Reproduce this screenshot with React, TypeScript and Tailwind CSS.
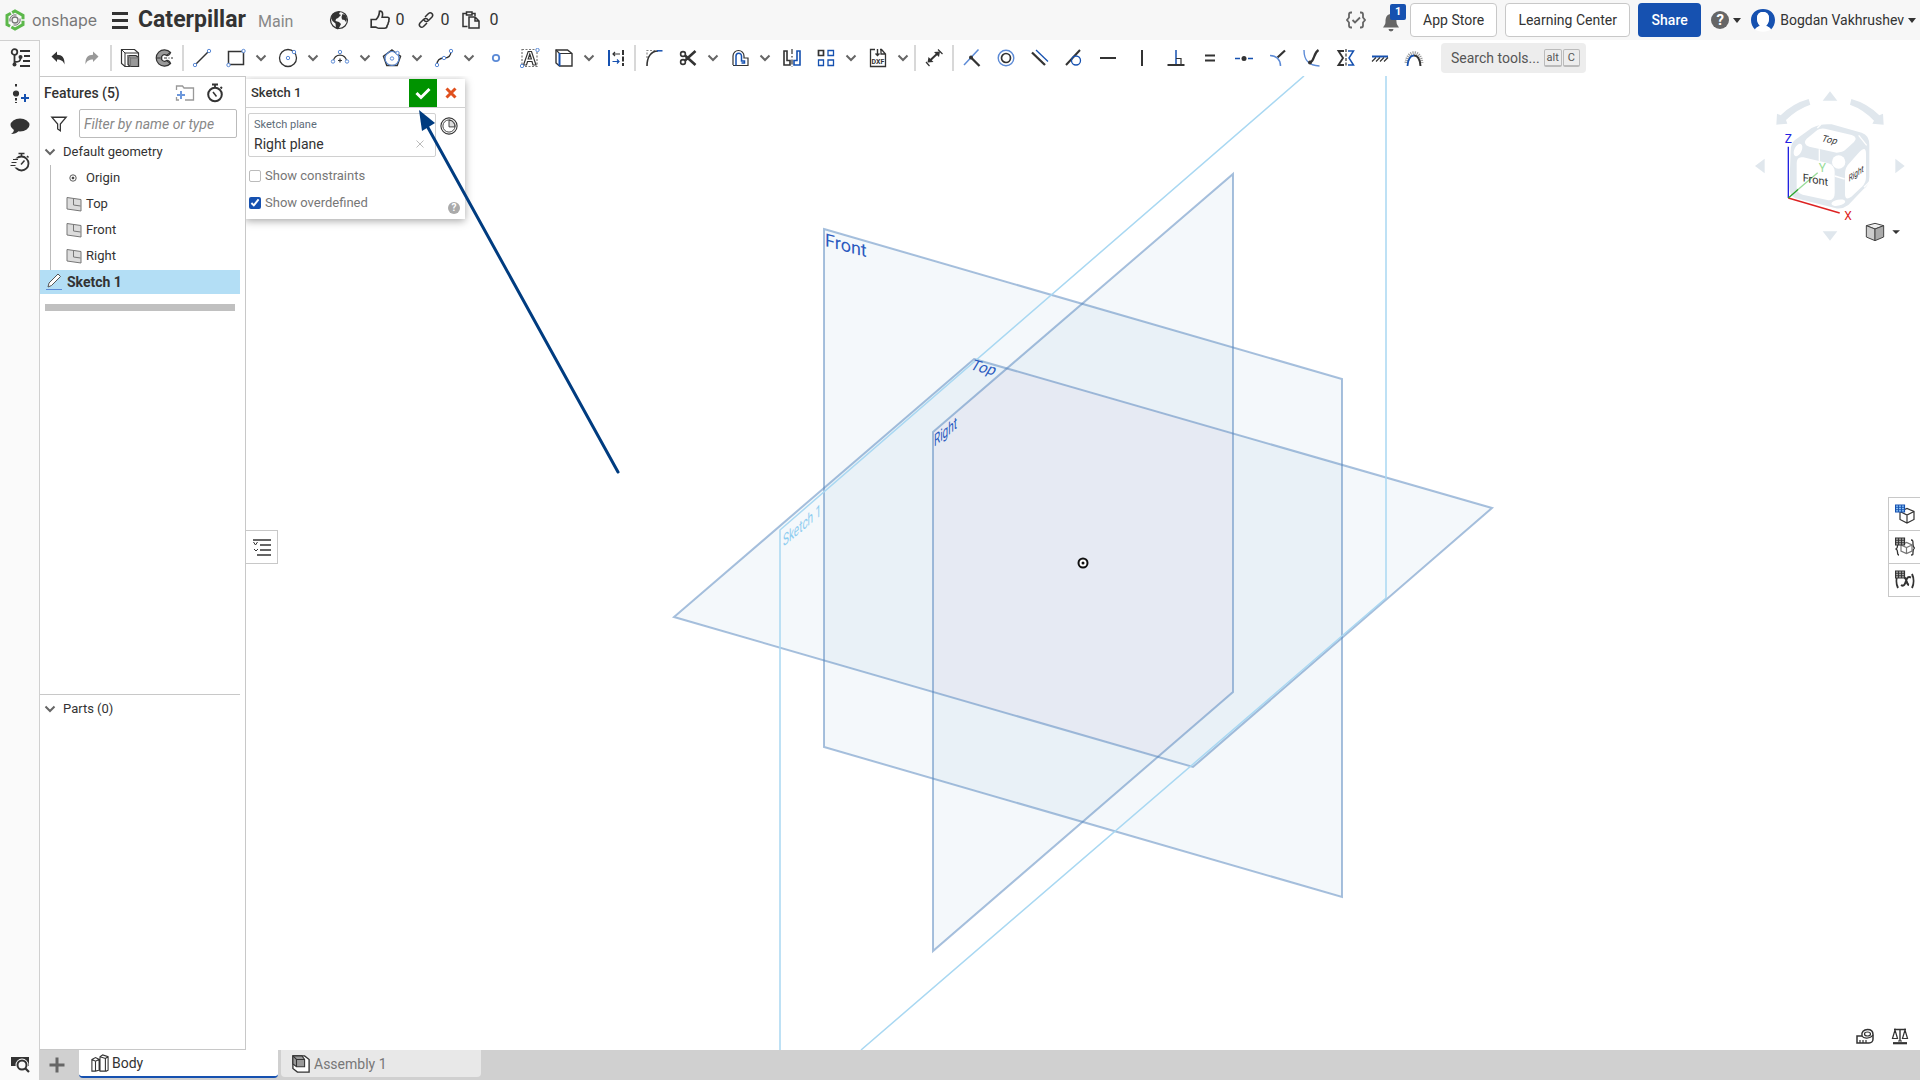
import React, { useState } from 'react';

const K = '#333333';
const B = '#1651b0';
const L = '#5b8ad6';

const Icon = ({ size = 20, children }: { size?: number; children: React.ReactNode }) => (
  <svg width={size} height={size} viewBox="0 0 20 20" fill="none" stroke={K} strokeWidth="1.2" className="shrink-0">
    {children}
  </svg>
);

const Dot = ({ x, y }: { x: number; y: number }) => (
  <circle cx={x} cy={y} r="1.7" fill="#fff" stroke={L} strokeWidth="1" />
);

const Chevron = () => (
  <svg width="12" height="8" viewBox="0 0 12 8" fill="none" stroke="#666" strokeWidth="2">
    <path d="M1.5 1.5 6 6l4.500-4.500" />
  </svg>
);

const Caret = () => (
  <svg width="8" height="5" viewBox="0 0 8 5" fill={K}>
    <path d="M0 0h8L4 5z" />
  </svg>
);

const Plane = () => (
  <svg width="16" height="16" viewBox="0 0 16 16" fill="#dcdcdc" stroke="#777" strokeWidth="1">
    <path d="M1 1.500 15 3.500V15L1 13z" />
    <path d="M7.500 2.500v6.500l7 1" fill="none" />
  </svg>
);

const Stopwatch = () => (
  <Icon>
    <circle cx="10" cy="11.500" r="6.800" strokeWidth="2" />
    <path d="M7 1.500h6M10 1.500v3M15.500 4l1.500 1.500" strokeWidth="1.800" />
    <path d="M11.500 13.500 8 9" strokeWidth="1.500" />
  </Icon>
);

type Tool = { name: string; icon?: React.ReactNode; menu?: boolean };

const tools: Tool[] = [
  {
    name: 'Undo',
    icon: <path d="M3.500 8.500 9 3.500v3.200c5 0 8 3 7.500 9.800-1.200-3.600-3.500-5-7.500-5V14z" fill={K} stroke="none" />,
  },
  {
    name: 'Redo',
    icon: <path d="M16.500 8.500 11 3.500v3.200c-5 0-8 3-7.500 9.800 1.200-3.600 3.500-5 7.500-5V14z" fill="#999" stroke="none" />,
  },
  { name: '|' },
  {
    name: 'Extrude',
    icon: (
      <>
        <path d="M1.500 1.500h13l4 3.500v13.500H5l-3.500-3z" />
        <path d="M1.500 1.500 5 5h13.500M5 5v13.500" strokeWidth="1" />
        <path d="M8 7.500h8l2.500 2v9H10l-2-2z" fill="#999" />
        <path d="M8 7.500 10.500 10h8M10.500 10v8.500" stroke="#777" />
      </>
    ),
  },
  {
    name: 'Revolve',
    icon: (
      <>
        <path d="M16.500 4.500A8.200 8.200 0 1 0 16.500 15.500L12.500 12.500A3.200 3.200 0 1 1 12.500 7.500z" fill="#999" />
        <path d="M12.500 7.500c1.500.3 3.500-.5 4-3M12.500 12.500c1.500-.3 3.500.5 4 3" />
        <path d="M3 10h16" strokeDasharray="3 1.500 1 1.500" />
      </>
    ),
  },
  { name: '|' },
  { name: 'Line', icon: <><path d="M3 17 17 3" strokeWidth="1.500" /><Dot x={3} y={17} /><Dot x={17} y={3} /></> },
  {
    name: 'Rectangle',
    menu: true,
    icon: <><path d="M2.500 3.500h15v13h-15z" strokeWidth="1.500" /><Dot x={17.5} y={3} /><Dot x={2.5} y={17} /></>,
  },
  {
    name: 'Circle',
    menu: true,
    icon: <><circle cx="10" cy="10" r="8.500" strokeWidth="1.300" /><Dot x={10} y={10} /><Dot x={16} y={4} /></>,
  },
  {
    name: 'Arc',
    menu: true,
    icon: (
      <>
        <path d="M3 13.500a7.300 9 0 0 1 14 0" strokeWidth="1.300" />
        <path d="M10 10.500v4M8 12.500h4" />
        <Dot x={3} y={13.5} /><Dot x={17} y={13.5} /><Dot x={10} y={4} />
      </>
    ),
  },
  {
    name: 'Polygon',
    menu: true,
    icon: (
      <>
        <path d="M10 2 18.500 8.200 15.200 17.500H4.800L1.500 8.200z" strokeWidth="1.500" />
        <circle cx="10" cy="10.500" r="7" stroke={L} />
        <Dot x={10} y={10.5} /><Dot x={15.5} y={5} />
      </>
    ),
  },
  {
    name: 'Spline',
    menu: true,
    icon: (
      <>
        <path d="M3 17c0-5 2-7 7-7s7-2 7-7" strokeWidth="1.300" />
        <Dot x={3} y={17} /><Dot x={10} y={10} /><Dot x={17} y={3} />
      </>
    ),
  },
  { name: 'Point', icon: <circle cx="10" cy="10" r="3.200" stroke={L} strokeWidth="1.800" /> },
  {
    name: 'Text',
    icon: (
      <>
        <path d="M2 1.500h15v17H2z" strokeDasharray="2 1.500" stroke="#777" />
        <path d="M3.500 17 8.200 3.500h3.300L16 17h-3l-1-3.500H7.500L6.500 17zM8.200 11h3.200L9.800 6z" fill="#fff" />
        <Dot x={17.5} y={2} /><Dot x={2} y={18} />
      </>
    ),
  },
  {
    name: 'Use',
    menu: true,
    icon: (
      <>
        <path d="M2 2h11.500L18 5.500V18H5.500L2 15z" strokeWidth="1.400" />
        <path d="M2 2l3.500 3.500H18" />
        <path d="M5.500 5v13" stroke={B} strokeWidth="2" />
      </>
    ),
  },
  {
    name: 'Intersection',
    icon: (
      <>
        <path d="M3 2v16" stroke={B} strokeWidth="2" />
        <path d="M17 2v16" strokeDasharray="5 1.500" strokeWidth="2" />
        <path d="M14 6H7M9 4 7 6l2 2" />
        <path d="M6.500 13.500H13M11 11.500l2 2-2 2" stroke={B} />
      </>
    ),
  },
  { name: '|' },
  {
    name: 'Fillet',
    icon: (
      <>
        <path d="M3 10V2.500h8" strokeDasharray="2 1.500" stroke="#888" />
        <path d="M3 18C3 9 7 3 14 3" strokeWidth="1.600" />
        <path d="M13 2.800h5.500" stroke={B} strokeWidth="1.500" />
      </>
    ),
  },
  {
    name: 'Trim',
    menu: true,
    icon: (
      <>
        <circle cx="5" cy="6" r="2.400" strokeWidth="1.600" />
        <circle cx="5" cy="14" r="2.400" strokeWidth="1.600" />
        <path d="M7 7.500 17.500 17M7 12.500 17.500 3" strokeWidth="2.600" />
      </>
    ),
  },
  {
    name: 'Offset',
    menu: true,
    icon: (
      <>
        <path d="M3 17V8a5.500 5.500 0 0 1 11 0v2h4v7.500H3" strokeWidth="1.200" />
        <path d="M6 17.500V8a2.500 2.500 0 0 1 5.500 0v5h3v2h-3" stroke={B} strokeWidth="1.500" />
      </>
    ),
  },
  {
    name: 'Mirror',
    icon: (
      <>
        <path d="M2 3h3v9.500h3V17H2z" strokeWidth="1.600" />
        <path d="M18 3h-3v9.500h-3V17h6z" stroke={B} strokeWidth="1.600" />
        <path d="M10 1v18" strokeDasharray="5 2 1.500 2" />
      </>
    ),
  },
  {
    name: 'Pattern',
    menu: true,
    icon: (
      <>
        <path d="M2.500 2.500h5v5h-5z" strokeWidth="1.700" />
        <path d="M12 2.500h5.500v5H12zM2.500 12h5v5.500h-5zM12 12h5.500v5.500H12z" stroke={B} strokeWidth="1.300" />
      </>
    ),
  },
  {
    name: 'Insert DXF',
    menu: true,
    icon: (
      <>
        <path d="M7 1.500H2.500v17h15V6l-4-4.500H12M13 1.500V6h4.500" strokeWidth="1.300" />
        <path d="M9.500 1v6M7.500 5.500l2 2 2-2" strokeWidth="1.400" />
        <text x="10" y="16" fontSize="7" fontWeight="700" textAnchor="middle" fill={K} stroke="none">DXF</text>
      </>
    ),
  },
  { name: '|' },
  {
    name: 'Dimension',
    icon: (
      <>
        <path d="M6 12.500 14 5" strokeWidth="2" />
        <path d="M3.500 14.500 4.500 9l5 5zM16 3.500 15 9l-5-5z" fill={K} stroke="none" />
        <path d="M2 14 5.500 18M14 1.500 18.500 6" strokeWidth="1.200" />
      </>
    ),
  },
  { name: '|' },
  {
    name: 'Coincident',
    icon: (
      <>
        <path d="M2 17 16.500 1.500" stroke={L} strokeWidth="1.500" />
        <path d="M9 9.500 17.500 18" strokeWidth="2.300" />
        <circle cx="9" cy="9.500" r="2" fill={K} stroke="none" />
      </>
    ),
  },
  {
    name: 'Concentric',
    icon: <><circle cx="10" cy="10" r="7.800" stroke={L} strokeWidth="1.400" /><circle cx="10" cy="10" r="4.500" strokeWidth="1.700" /></>,
  },
  {
    name: 'Parallel',
    icon: <><path d="M2 4.500 15 17" strokeWidth="2.300" /><path d="M6 2 18 13.500" stroke={B} strokeWidth="1.300" /></>,
  },
  {
    name: 'Tangent',
    icon: <><path d="M2 17 16 2" strokeWidth="2" /><circle cx="12" cy="12.500" r="4.500" stroke={B} strokeWidth="1.300" /></>,
  },
  { name: 'Horizontal', icon: <path d="M2 10h16" strokeWidth="2" /> },
  { name: 'Vertical', icon: <path d="M10 2v16" strokeWidth="2" /> },
  {
    name: 'Perpendicular',
    icon: <><path d="M10 2v14" stroke={B} strokeWidth="1.500" /><path d="M1.500 17h17" strokeWidth="2" /><path d="M10 10.500h5V16" /></>,
  },
  { name: 'Equal', icon: <path d="M5 7.500h10M5 12.500h10" strokeWidth="2" /> },
  {
    name: 'Midpoint',
    icon: <><path d="M1 10.500h5M14 10.500h5" stroke={B} strokeWidth="1.500" /><circle cx="10" cy="10.500" r="2.500" fill={K} stroke="none" /></>,
  },
  {
    name: 'Normal',
    icon: <><path d="M9.500 9.500 17 2.500" strokeWidth="2.200" /><path d="M2 7.500c6 0 10.500 4 10.500 10.500" stroke={L} strokeWidth="1.500" /></>,
  },
  {
    name: 'Pierce',
    icon: (
      <>
        <path d="M2 2c0 10 4 15.500 15.500 16" stroke={L} strokeWidth="1.400" />
        <path d="M8 14.500c5-2 3-9 8.500-12.500" strokeWidth="2.200" />
        <circle cx="8" cy="14.500" r="2" fill={K} stroke="none" />
      </>
    ),
  },
  {
    name: 'Symmetric',
    icon: (
      <>
        <path d="M8 3H2.500l4.500 7-4.500 7H8" strokeWidth="1.900" />
        <path d="M12 3h5.500L13 10l4.500 7H12" stroke={B} strokeWidth="1.500" />
        <path d="M10 1v18" strokeDasharray="3 1.500" />
      </>
    ),
  },
  {
    name: 'Fix',
    icon: <><path d="M2 8.500h16" stroke={B} strokeWidth="2" /><path d="M6 9.500 2 13.500M10 9.500l-4 4M14 9.500l-4 4M18 9.500l-4 4" /></>,
  },
  {
    name: 'Curvature',
    icon: (
      <>
        <path d="M2.500 15C4 2 16 2 17.500 15" strokeWidth="4" stroke="#999" strokeDasharray="1 1" />
        <path d="M3.500 18C4 11 6.500 7.500 10 7.500" stroke={B} strokeWidth="1.800" />
        <path d="M10 7.500c3.500 0 6 3.500 6.500 10.500" strokeWidth="2" />
      </>
    ),
  },
];

const Header = () => (
  <header className="flex h-10 shrink-0 items-center bg-[#f7f7f7] pr-1">
    <svg width="22" height="22" viewBox="0 0 22 22" fill="none" className="ml-1">
      <path d="M11 2 19 6.500v9L11 20l-8-4.500v-9z" stroke="#5cb84b" strokeWidth="3" strokeDasharray="17 1.500" strokeDashoffset="4" />
      <path d="M6 12.500a5.300 5.300 0 0 1 6.500-6.500M16 9.500a5.300 5.300 0 0 1-6.500 6.500" stroke="#666" />
      <circle cx="11" cy="11" r="3" stroke="#777" strokeWidth="1.300" />
    </svg>
    <span className="ml-[6px] w-[68px] font-['Inter'] text-base text-[#777]">onshape</span>
    <button aria-label="Menu" className="ml-3 flex w-4 flex-col gap-1">
      <span className="h-[3px] bg-[#333]" />
      <span className="h-[3px] bg-[#333]" />
      <span className="h-[3px] bg-[#333]" />
    </button>
    <h1 className="ml-[10px] w-[112px] text-[23px] font-bold">Caterpillar</h1>
    <span className="ml-2 pt-1 text-base text-[#888]">Main</span>
    <button aria-label="Public" className="ml-9">
      <Icon>
        <circle cx="10" cy="10" r="8.500" />
        <path d="M3 5.500C5 2 8 1.500 11 2l-1 2 2 1-3 3-2 1-.5 2 3.500 1 2 2-2 4-1 1.500-2-1-.5-5L3.500 11 2 8zM13.500 4l3 1 1.500 4-1 3-1.500-2-2.500-.5L12.500 7z" fill={K} stroke="none" />
      </Icon>
    </button>
    <button className="ml-5 flex items-center gap-1 text-base">
      <Icon size={22}>
        <path d="M2 9.500h4.500c1.500-1.500 3-3.500 3-7.500 2.500-.5 3.500 1.500 2.500 5.500h5c1.500 0 1.500 1.500 1 2.500.5 1-.2 2-.5 2.500 0 1-.3 1.700-1 2.500 0 2-1 2.500-2.500 2.500H9c-1.500 0-2-1-3-1H2z" strokeWidth="1.500" />
      </Icon>
      <span>0</span>
    </button>
    <button className="ml-3 flex items-center gap-1 text-base">
      <Icon>
        <path d="m9 7 3.500-3.500c2.500-2 5.500 1 3.500 3.500l-3.500 3.500c-1.500 1.500-3.500 1.500-4.500-.5M11 13l-3.500 3.500c-2.500 2-5.500-1-3.500-3.500l3.500-3.500c1.500-1.500 3.500-1.500 4.500.5" strokeWidth="1.500" />
      </Icon>
      <span>0</span>
    </button>
    <button className="ml-3 flex items-center gap-2 text-base">
      <Icon>
        <path d="M6.500 16.500H2V3.500h3.500M11 3.500h3V6M5.500 2H11v3H5.500z" strokeWidth="1.500" />
        <path d="M8 7h6l4 4v7H8zM14 7v4h4" strokeWidth="1.500" />
      </Icon>
      <span>0</span>
    </button>

    <div className="ml-auto flex items-center text-sm">
      <button aria-label="Feature checks" className="mr-4">
        <svg width="20" height="18" viewBox="0 0 20 18" fill="none" stroke="#666" strokeWidth="1.800">
          <path d="M6 1.500H5c-1.500 0-2 .5-2 2v3L1 9l2 2.500v3c0 1.500.5 2 2 2h1M14 1.500h1c1.500 0 2 .5 2 2v3L19 9l-2 2.500v3c0 1.500-.5 2-2 2h-1M6.500 9l2.500 2.500L14 6.500" />
        </svg>
      </button>
      <button aria-label="Notifications" className="relative mr-1 h-8 w-6">
        <svg width="18" height="20" viewBox="0 0 18 20" fill="#666" className="mt-2">
          <path d="M9 0c4.500 0 5.500 4 5.500 8 0 2.500 1.500 3.500 2.500 5.500H1c1-2 2.500-3 2.500-5.500 0-4 1-8 5.500-8zM6.500 15h5a2.500 2.500 0 0 1-5 0z" />
        </svg>
        <span className="absolute top-0 right-0 h-4 w-4 rounded-xs bg-[#1651b0] text-center text-[11px] leading-4 font-bold text-white">1</span>
      </button>
      <button className="h-[34px] w-[87px] rounded-sm border border-[#c8c8c8] bg-white">App Store</button>
      <button className="ml-2 h-[34px] w-[125px] rounded-sm border border-[#c8c8c8] bg-white">Learning Center</button>
      <button className="ml-2 h-[34px] w-[63px] rounded-sm bg-[#1651b0] font-medium text-white">Share</button>
      <button aria-label="Help" className="ml-[10px] flex items-center gap-1">
        <span className="h-[18px] w-[18px] rounded-full bg-[#666] text-center text-[15px] leading-[18px] font-bold text-white">?</span>
        <Caret />
      </button>
      <button className="ml-[9px] flex items-center gap-1">
        <svg width="26" height="24" viewBox="0 0 26 24">
          <path d="M13 1c7 0 12 4.500 12 11 0 4-1.500 7-4 9.500-1-2-3-3-5-3.500 2-2 3-5 3-7.500C19 6.500 17 4 13 4s-6 2.500-6 6.500c0 2.500 1 5.500 3 7.500-2 .5-4 1.500-5 3.500C2.500 19 1 16 1 12 1 5.500 6 1 13 1z" fill="#1651b0" />
          <path d="M5 21.500c1-2 3-3 5-3.500-2-2-3-5-3-7.500C7 6.500 9 4 13 4s6 2.500 6 6.500c0 2.500-1 5.500-3 7.500 2 .5 4 1.500 5 3.500-5 3-11 3-16 0z" fill="#fff" />
        </svg>
        <span>Bogdan Vakhrushev</span>
        <Caret />
      </button>
    </div>
  </header>
);

const Rail = () => (
  <nav className="flex w-10 shrink-0 flex-col items-center border-t border-r border-[#d0d0d0] bg-[#fafafa] pt-[7px] pb-[6px]">
    <button aria-label="Feature list" className="mb-4">
      <Icon>
        <circle cx="4.500" cy="4" r="2.800" strokeWidth="1.800" />
        <path d="M4.500 7v11M4.500 14c5 0 6-1 6-4" strokeWidth="1.800" />
        <circle cx="4.500" cy="16.500" r="2" fill={K} stroke="none" />
        <circle cx="10.500" cy="9" r="2" fill={K} stroke="none" />
        <path d="M10 3h10M14 8h6M13 13h7M10 18h10" strokeWidth="1.800" />
      </Icon>
    </button>
    <button aria-label="Insert version" className="mb-3">
      <Icon>
        <path d="M6 0v4M6 14v5" strokeDasharray="2.500 1.500" strokeWidth="2" />
        <circle cx="6" cy="9.500" r="2.500" fill={K} />
        <path d="M15 10v8M11 14h8" stroke={B} strokeWidth="2" />
      </Icon>
    </button>
    <button aria-label="Comments" className="mb-4">
      <Icon>
        <ellipse cx="10" cy="9" rx="9.500" ry="6.500" fill={K} stroke="none" />
        <path d="M4 13c0 2-1 4-3 5 4 0 7-1.500 8-4z" fill={K} stroke="none" />
      </Icon>
    </button>
    <button aria-label="History">
      <Icon>
        <circle cx="11.500" cy="11.500" r="7" strokeWidth="1.800" />
        <path d="M8.500 1.500h6M11.500 1.500v3M17 4l1.500 1.500" strokeWidth="1.600" />
        <path d="M11 12.500 14.500 8.500" strokeWidth="1.500" />
        <path d="M2 8h7M1 11h7M0 14h7" stroke="#fafafa" strokeWidth="3" />
        <path d="M3 7.500h5M1.500 10.500h5M.5 13.500h5" strokeWidth="1.200" />
      </Icon>
    </button>
    <button aria-label="Search tabs" className="mt-auto">
      <Icon>
        <path d="M1 3h18v9H1z" fill={K} stroke="none" />
        <circle cx="12" cy="11" r="5" fill="#fafafa" stroke="#fafafa" strokeWidth="3" />
        <circle cx="12" cy="11" r="4.500" strokeWidth="2" />
        <path d="m15.500 14.500 3.500 3.500" strokeWidth="2.200" />
      </Icon>
    </button>
  </nav>
);

const Toolbar = () => (
  <div className="flex h-9 shrink-0 items-center bg-white pl-px">
    {tools.map((tool, i) =>
      tool.name === '|' ? (
        <span key={i} className="mx-px h-[26px] w-[2px] bg-[#d8d8d8]" />
      ) : (
        <div key={i} className="flex items-center">
          <button aria-label={tool.name} className="flex w-[34px] justify-center">
            <Icon>{tool.icon}</Icon>
          </button>
          {tool.menu && (
            <button aria-label={tool.name + ' options'} className="w-[18px] pl-[2px]">
              <Chevron />
            </button>
          )}
        </div>
      )
    )}
    <button className="ml-[10px] flex h-[30px] w-[145px] items-center rounded-sm bg-[#ededed] pl-[10px] text-sm whitespace-nowrap text-[#555]">
      <span className="mr-1">Search tools...</span>
      <kbd className="h-[18px] rounded-xs border border-b-2 border-[#bbb] px-[2px] font-['Roboto'] text-[11px] leading-4">alt</kbd>
      <kbd className="ml-px h-[18px] rounded-xs border border-b-2 border-[#bbb] px-1 font-['Roboto'] text-[11px] leading-4">C</kbd>
    </button>
  </div>
);

const FeaturePanel = () => {
  const [filter, setFilter] = useState('');

  return (
    <aside className="flex w-[206px] shrink-0 flex-col border-t border-r border-b border-[#c8c8c8] bg-white text-[13px]">
      <div className="flex h-8 items-center pr-5 pl-1">
        <h2 className="mr-auto text-sm font-medium">Features (5)</h2>
        <button aria-label="Add folder" className="mr-[10px]">
          <svg width="20" height="16" viewBox="0 0 20 16" fill="none" stroke="#999" strokeWidth="1.300">
            <path d="M1.500 5V1h6l1.500 2h9.500v12H10M1.500 12v3H4" />
            <path d="M6 6v8M2 10h8" stroke="#6d98dc" strokeWidth="2" />
          </svg>
        </button>
        <button aria-label="Regeneration times"><Stopwatch /></button>
      </div>
      <div className="flex items-center pl-[10px]">
        <Icon size={18}>
          <path d="M2 2.500h16l-6.500 7.500v7.500l-3-2V10z" strokeWidth="1.400" />
        </Icon>
        <input
          type="text"
          aria-label="Filter by name or type"
          placeholder="Filter by name or type"
          value={filter}
          onChange={(e) => setFilter(e.target.value)}
          className="ml-[11px] h-[29px] w-[158px] rounded-xs border border-[#bbb] px-1 text-sm italic placeholder:text-[#888]"
        />
      </div>
      <button className="mt-px flex h-[26px] items-center gap-[7px] pl-1"><Chevron />Default geometry</button>
      <ul className="ml-[10px] border-l border-[#bbb] pb-px">
        <li className="flex h-[26px] items-center pl-[18px]">
          <svg width="8" height="8" viewBox="0 0 10 10" fill="none" stroke={K} strokeWidth="1" className="mr-[9px]">
            <circle cx="5" cy="5" r="4" /><circle cx="5" cy="5" r="1.200" fill={K} />
          </svg>
          Origin
        </li>
        {['Top', 'Front', 'Right'].map((name) => (
          <li key={name} className="flex h-[26px] items-center gap-1 pl-[15px]"><Plane />{name}</li>
        ))}
      </ul>
      <button className="mr-[5px] flex h-6 items-center gap-1 bg-[#b3def5] pl-[5px] text-sm font-bold">
        <svg width="18" height="18" viewBox="0 0 18 18" fill="#fff" stroke="#555">
          <path d="m3 14 1-4 9-9 2.500 2.500-9 9z" />
          <path d="M1 16.500h16" stroke={L} />
        </svg>
        Sketch 1
      </button>
      <div className="mt-[10px] mr-[10px] ml-[5px] h-[7px] bg-[#c0c0c0]" />
      <div className="mt-auto mr-[5px] h-[355px] border-t border-[#c8c8c8]">
        <button className="flex h-7 items-center gap-[7px] pl-1"><Chevron />Parts (0)</button>
      </div>
    </aside>
  );
};

const SketchDialog = () => {
  const [constraints, setConstraints] = useState(false);
  const [overdefined, setOverdefined] = useState(true);

  return (
    <section className="absolute top-[3px] -left-px h-[140px] w-[220px] bg-white text-[13px] shadow-[0_2px_8px_rgba(0,0,0,0.35)]">
      <div className="flex h-[29px] items-center border-b border-[#d0d0d0] pl-[6px]">
        <h3 className="mr-auto font-medium">Sketch 1</h3>
        <button aria-label="Accept" className="flex h-7 w-7 items-center justify-center bg-[#009300]">
          <svg width="16" height="13" viewBox="0 0 16 13" fill="none" stroke="#fff" strokeWidth="3"><path d="m1.500 6 4.500 4.500 8.500-8.500" /></svg>
        </button>
        <button aria-label="Cancel" className="flex w-7 justify-center">
          <svg width="12" height="12" viewBox="0 0 12 12" stroke="#e0501e" strokeWidth="3"><path d="m1.500 1.500 9 9M10.500 1.500l-9 9" /></svg>
        </button>
      </div>
      <div className="flex gap-1 pt-[5px] pl-[3px]">
        <div className="h-11 w-[188px] rounded-xs border border-[#d0d0d0] px-[5px] pt-1">
          <div className="text-[11px] leading-[14px] text-[#5c6b78]">Sketch plane</div>
          <div className="flex items-center justify-between pr-[6px] text-sm leading-6">
            Right plane
            <button aria-label="Clear">
              <svg width="8" height="8" viewBox="0 0 8 8" stroke="#bbb"><path d="m.5.5 7 7M7.500.5l-7 7" /></svg>
            </button>
          </div>
        </div>
        <button aria-label="Sketch history" className="h-[26px]">
          <Icon size={18}>
            <circle cx="10" cy="10" r="9" />
            <circle cx="10" cy="10" r="6.800" fill="#fff" strokeWidth="1" />
            <path d="M10 3.500V11h6.500a7 7 0 0 0-6.500-7.500z" fill="#ddd" strokeWidth="1" />
          </Icon>
        </button>
      </div>
      <label className="mt-[9px] flex h-5 items-center gap-1 pl-1 text-[#777]">
        <input
          type="checkbox"
          checked={constraints}
          onChange={(e) => setConstraints(e.target.checked)}
          className="h-3 w-3 appearance-none rounded-xs border border-[#bbb] bg-white"
        />
        Show constraints
      </label>
      <div className="mt-[7px] flex h-5 items-center justify-between pr-[5px] pl-1">
        <label className="flex items-center gap-1 text-[#777]">
          <input
            type="checkbox"
            checked={overdefined}
            onChange={(e) => setOverdefined(e.target.checked)}
            className="h-3 w-3 accent-[#1651b0]"
          />
          Show overdefined
        </label>
        <button aria-label="Dialog help" className="mt-[10px] h-3 w-3 rounded-full bg-[#aaa] text-center text-[10px] leading-3 font-bold text-white">?</button>
      </div>
    </section>
  );
};

const ViewCube = () => (
  <svg width="180" height="170" viewBox="0 0 540 510" className="absolute top-1 right-0">
    <g fill="#e0e7ed">
      <path d="M248 62 270 34l22 28zM248 454h44l-22 28zM74 236v44l-29-22zM466 236v44l28-22z" />
      <path d="M206 57 211 74Q170 88 138 120L142 131 109 134 111 101 122 106Q158 70 206 57zM334 57 330 74Q370 88 402 122L397 131 431 134 429 101 418 106Q382 70 334 57z" />
      <path d="M152 215Q152 190 165 180L215 144Q240 130 275 133L365 158Q388 165 388 195V290Q388 315 370 328L325 375Q305 390 285 384L165 354Q148 345 148 320z" />
    </g>
    <g fill="#fff">
      <path d="M200 176 232 150Q240 144 255 146L335 165Q355 172 342 186L318 208Q308 218 290 218L208 200Q185 192 200 176z" />
      <path d="M170 250Q170 228 190 232L265 250Q284 256 284 276V340Q284 364 262 360L188 344Q170 340 170 322z" />
      <path d="M315 282Q315 262 328 250L358 216Q378 195 378 222V290Q378 308 366 320L334 350Q315 364 315 342z" />
      <circle cx="296" cy="246" r="20" />
      <ellipse cx="174" cy="210" rx="11" ry="20" transform="rotate(25 174 210)" />
      <ellipse cx="295" cy="368" rx="21" ry="9" transform="rotate(-12 295 368)" />
    </g>
    <path d="M238 208v36M284 288l30 9M356 166l24 30M372 322l16-16M232 144l10-10" stroke="#fff" strokeWidth="4" />
    <path d="M145 354V200" stroke="#2222e0" strokeWidth="4" />
    <path d="m145 354 154 45" stroke="#dd2222" strokeWidth="4" />
    <path d="m145 354 30-26" stroke="#2ba52b" strokeWidth="4" />
    <path d="m175 328 58-50" stroke="#98dc98" strokeWidth="4" />
    <g fill={K} fontSize="36">
      <text x="134" y="189" fill="#2222e0">Z</text>
      <text x="313" y="419" fill="#dd2222">X</text>
      <text x="236" y="276" fill="#98dc98">Y</text>
      <text transform="translate(188 304) skewY(10)" fontSize="33">Front</text>
      <text transform="translate(326 306) rotate(-35) skewX(-35)" fontSize="24">Right</text>
      <text transform="translate(242 184) rotate(10) skewX(-16)" fontSize="28">Top</text>
    </g>
    <g stroke="#444" strokeWidth="3">
      <path d="m379 437 26-7 26 7-26 10z" fill="#eee" />
      <path d="M379 437v34l26 11v-35z" fill="#ccc" />
      <path d="M431 437v34l-26 11v-35z" fill="#aaa" />
    </g>
    <path d="M457 451h23l-12 11z" fill={K} />
  </svg>
);

const Grid = ({ color, fill }: { color: string; fill: string }) => (
  <>
    <path d="M.5 1h9v7h-9z" fill={fill} stroke={color} />
    <path d="M3.500 1v7M6.500 1v7M.5 3.300h9M.5 5.700h9" stroke={color} strokeWidth="0.900" />
  </>
);

const sideIcons = [
  {
    name: 'Configurations',
    icon: (
      <>
        <path d="m5 7.500 7-3 7 3v8L12 19l-7-3.500zM5 7.500l7 3.500 7-3.500M12 11v8" fill="#fff" />
        <Grid color="#1651b0" fill="#8cc4f5" />
      </>
    ),
  },
  {
    name: 'Custom properties',
    icon: (
      <>
        <path d="m6 8 5.500-2.500L17 8v6l-5.500 2.500L6 14zM6 8l5.500 2.500L17 8M11.500 10.500v6" stroke="#777" />
        <path d="M4 6c-1.500 0-1.500 1-1.500 3S2 11.500 1 12c1 .5 1.500 1 1.500 3S2.500 18 4 18M16 3c2 0 2 1 2 4s.5 3.500 1.500 4c-1 .5-1.500 1-1.500 4s0 3-2 3" strokeWidth="1.300" />
        <Grid color="#333" fill="#aaa" />
      </>
    ),
  },
  {
    name: 'Variables',
    icon: (
      <>
        <path d="M3 4c-2 4-2 10 0 14M17 4c2 4 2 10 0 14" strokeWidth="1.900" />
        <path d="M6 15c3 2 4-1 5-4s2-5 5-3.500M9 7.500c3 0 2 7 5 7.500" strokeWidth="2" />
        <Grid color="#333" fill="#aaa" />
      </>
    ),
  },
];

const planes = [
  'M824 229 1342 379V897L824 747z',
  'M974 359 1492 508 1193 767 674 617z',
  'M933 432 1233 174V692L933 951z',
];

const Canvas = () => (
  <main className="relative min-w-0 flex-1 overflow-hidden bg-white">
    <svg viewBox="246 76 1674 974" className="absolute inset-0 h-full w-full" fill="none">
      {planes.map((d) => <path key={d} d={d} fill="#4b87b4" fillOpacity="0.060" />)}
      {/* where all three planes overlap */}
      <path d="M933 432 1007 368 1233 433V692L1158 757 933 692z" fill="#e6eaf3" />
      {planes.map((d) => <path key={d} d={d} stroke="#5082bc" strokeOpacity="0.500" strokeWidth="2" />)}
      <path d="M1304 76 780 530V1050M1386 76V598L861 1050" stroke="#a9d8f2" strokeWidth="1.500" />
      <g fill="#2a5abf" fontSize="18">
        <text transform="translate(825 246) skewY(15)">Front</text>
        <text transform="translate(969 369) rotate(15) skewX(-16)" fontSize="15">Top</text>
        <text transform="translate(934 447) rotate(-40) skewX(-40)" fontSize="13">Right</text>
        <text transform="translate(783 547) rotate(-40) skewX(-40)" fontSize="13" fill="#8fcdf0">Sketch 1</text>
      </g>
      <circle cx="1083" cy="563" r="4.500" fill="#fff" stroke="#111" strokeWidth="2" />
      <circle cx="1083" cy="563" r="1.500" fill="#111" />
    </svg>

    <SketchDialog />
    <button aria-label="Toggle feature list" className="absolute top-[454px] left-0 flex h-[34px] w-8 items-center justify-center border border-l-0 border-[#c8c8c8] bg-white">
      <Icon>
        <path d="M1 3h18M8 8h11M8 13h11M5 18h14" strokeWidth="1.400" />
        <path d="m1.500 5 2 3 2-3M2 12l2 2 2-2" strokeWidth="1" />
      </Icon>
    </button>
    <ViewCube />
    <div className="absolute top-[421px] right-0 flex w-8 flex-col border-t border-l border-[#c8c8c8] bg-white">
      {sideIcons.map((item) => (
        <button key={item.name} aria-label={item.name} className="flex h-[33px] items-center justify-center border-b border-[#c8c8c8]">
          <Icon>{item.icon}</Icon>
        </button>
      ))}
    </div>
    <div className="absolute right-[10px] bottom-1 flex gap-[15px]">
      <button aria-label="Measure">
        <Icon>
          <path d="M2 10h5c-1-4 2-6.500 5.500-6.500S18 5.500 18 8.500V13c0 2-1.500 4-4 4H2z" strokeWidth="1.500" />
          <ellipse cx="12.500" cy="8" rx="3" ry="2" />
          <path d="M7 10c1.500 3 8 3 11-1M5 14v3M8 14v3M11 14v3" />
        </Icon>
      </button>
      <button aria-label="Mass properties">
        <Icon>
          <path d="M10 3v12M4 3.500h12" strokeWidth="1.400" />
          <path d="m5 4-2.500 8.500h5zM15 4l-2.500 8.500h5zM8 15h4" />
          <path d="M3 17.200h14" strokeWidth="2.200" />
        </Icon>
      </button>
    </div>
    <svg viewBox="246 76 1674 974" className="pointer-events-none absolute inset-0 h-full w-full">
      <path d="M618 472 426 124" stroke="#003c80" strokeWidth="3" strokeLinecap="round" />
      <path d="M419 110 435 123 422 131z" fill="#003c80" />
    </svg>
  </main>
);

const TabBar = () => (
  <footer className="flex h-[30px] shrink-0 items-start bg-[#d0d0d0] text-sm">
    <button aria-label="Add tab" className="flex h-[29px] w-[39px] items-center justify-center pr-[6px]">
      <svg width="16" height="16" viewBox="0 0 16 16" stroke="#666" strokeWidth="3"><path d="M8 .5v15M.5 8h15" /></svg>
    </button>
    <button className="flex h-7 w-[199px] items-center gap-[3px] rounded-b-sm border-b-2 border-[#1651b0] bg-white pl-3">
      <Icon size={18}>
        <path d="M1 6l4-2 4 2v12l-4 1H1zM1 6l4 2 4-2M5 8v11M10 3l3-2 6 2v15l-2 1h-7zM10 3l6 2 3-2M16 5v14" />
      </Icon>
      Body
    </button>
    <button className="ml-[3px] flex h-[27px] w-[200px] items-center gap-1 rounded-b-sm bg-[#e8e8e8] pl-[11px] text-[#777]">
      <Icon size={18}>
        <path d="M1 1h13l5 4v14H6l-5-4z" fill="#fff" strokeWidth="1.500" />
        <path d="M1 1h10l3 4v8H5l-4-3z" fill="#999" />
        <path d="m1 1 4 4h9M5 5v8" />
      </Icon>
      Assembly 1
    </button>
  </footer>
);

export default function App() {
  return (
    <div className="flex h-screen flex-col overflow-hidden bg-white font-['Roboto',sans-serif] text-[#333]">
      <Header />
      <div className="flex min-h-0 flex-1">
        <Rail />
        <div className="flex min-w-0 flex-1 flex-col">
          <Toolbar />
          <div className="flex min-h-0 flex-1">
            <FeaturePanel />
            <Canvas />
          </div>
          <TabBar />
        </div>
      </div>
    </div>
  );
}
